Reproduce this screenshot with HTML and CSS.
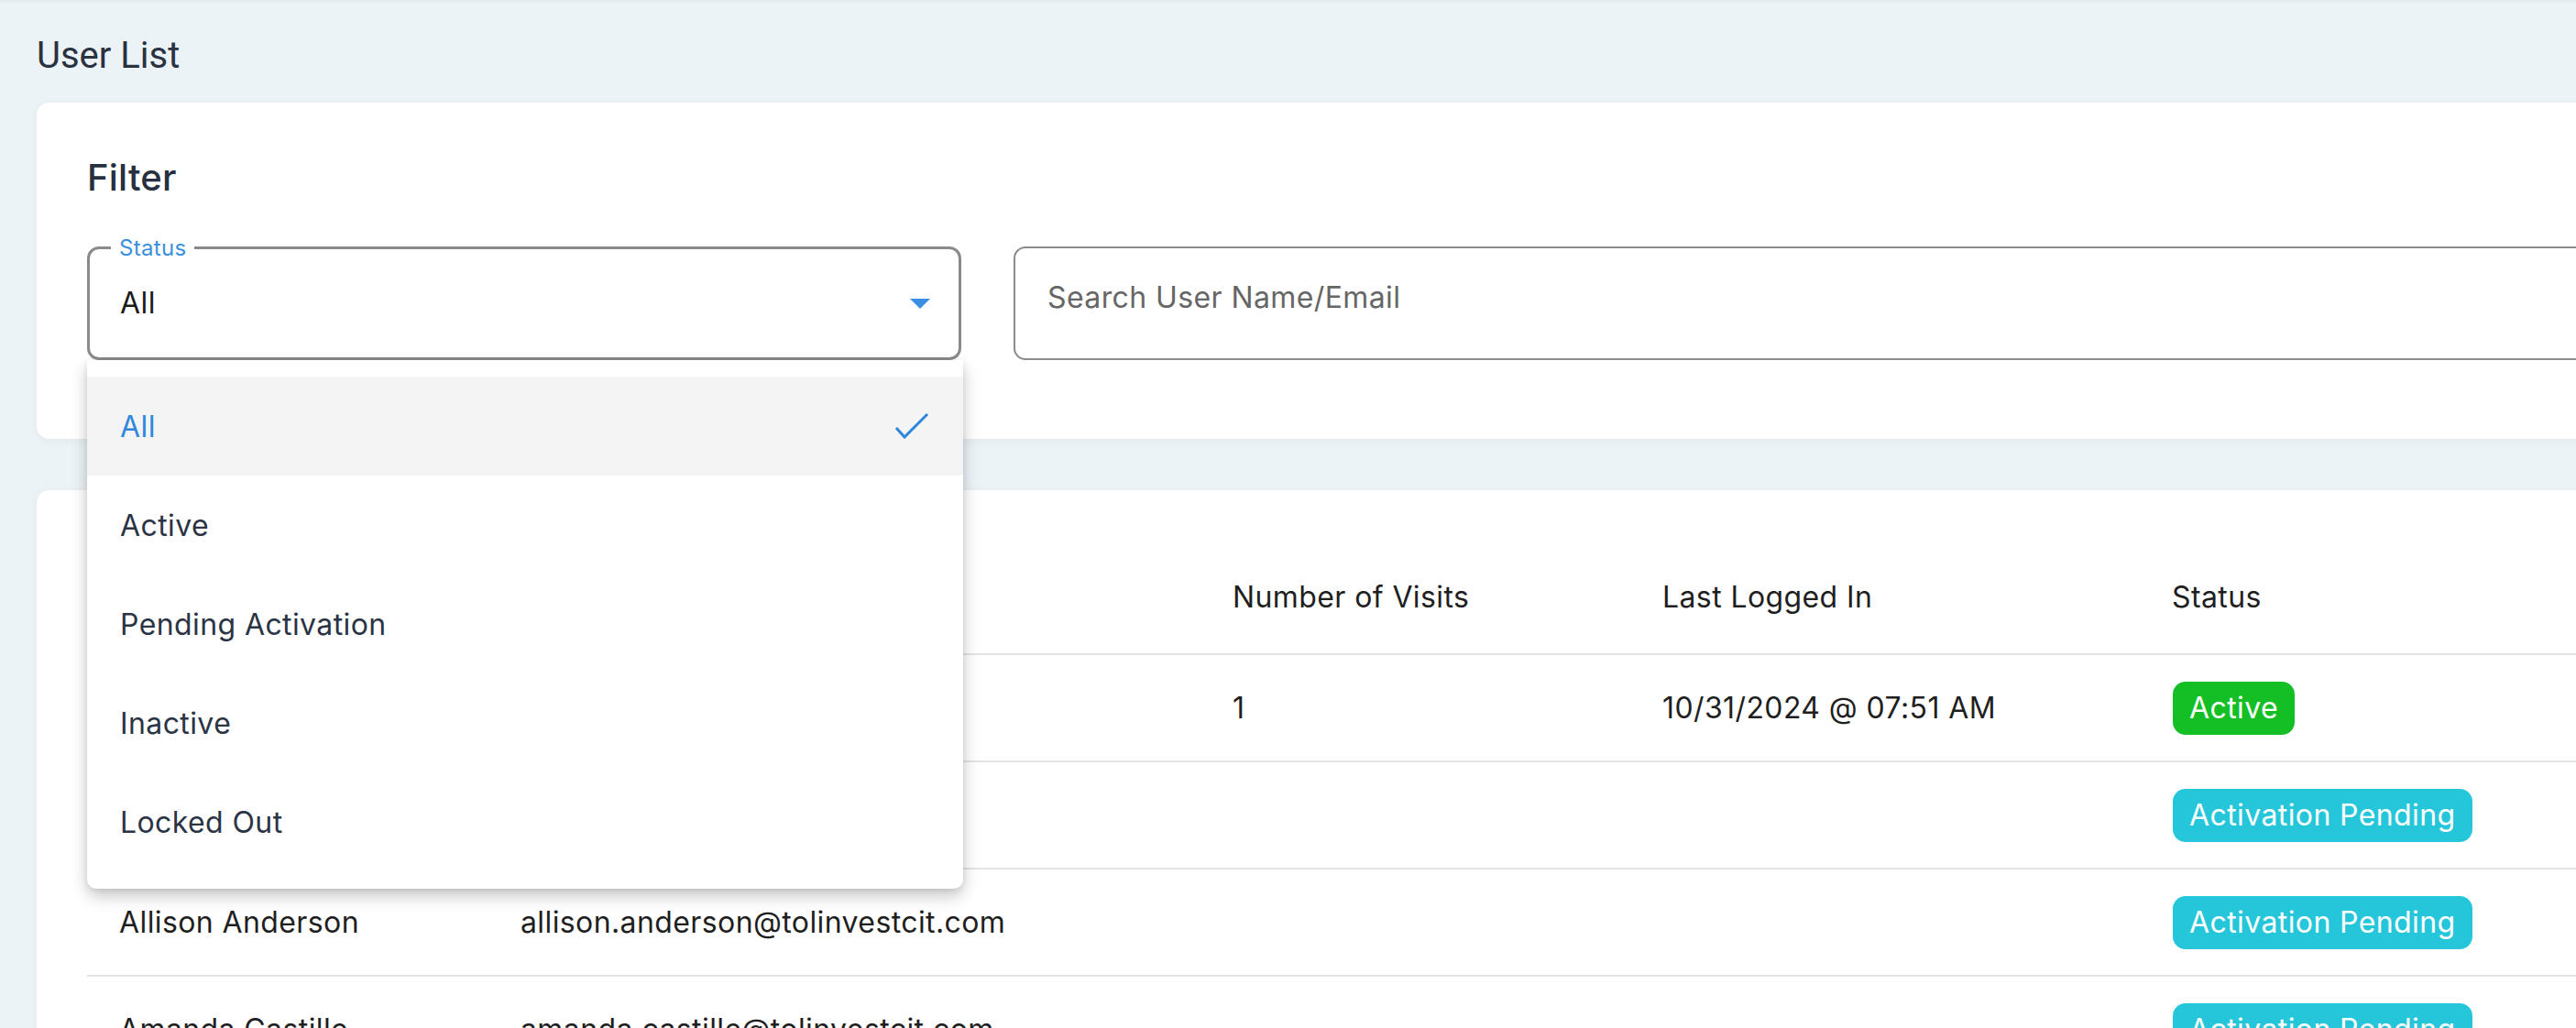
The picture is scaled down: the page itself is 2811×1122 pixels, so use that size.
FILE: index.html
```html
<!DOCTYPE html>
<html lang="en">
<head>
<meta charset="utf-8">
<title>User List</title>
<link rel="stylesheet" href="styles.css">
</head>
<body>
<div class="page">
  <h1 class="page-title">User List</h1>

  <section class="card filter-card">
    <h2 class="card-title">Filter</h2>
    <div class="filter-row">
      <div class="select-wrap">
        <div class="field field-select">
          <span class="field-label">Status</span>
          <span class="field-value">All</span>
          <span class="caret"></span>
        </div>
        <ul class="menu">
          <li class="menu-item is-selected">
            <span>All</span>
            <svg class="check" width="38" height="30" viewBox="0 0 38 30"><polyline points="2,17 11,27 36,2" fill="none" stroke="#2f87dc" stroke-width="3"/></svg>
          </li>
          <li class="menu-item"><span>Active</span></li>
          <li class="menu-item"><span>Pending Activation</span></li>
          <li class="menu-item"><span>Inactive</span></li>
          <li class="menu-item"><span>Locked Out</span></li>
        </ul>
      </div>
      <div class="field field-search">
        <span class="placeholder">Search User Name/Email</span>
      </div>
    </div>
  </section>

  <section class="card table-card">
    <div class="table">
      <div class="tr th">
        <div class="td">Name</div>
        <div class="td">Email</div>
        <div class="td">Number of Visits</div>
        <div class="td">Last Logged In</div>
        <div class="td">Status</div>
      </div>
      <div class="tr">
        <div class="td"></div>
        <div class="td"></div>
        <div class="td">1</div>
        <div class="td">10/31/2024 @ 07:51 AM</div>
        <div class="td"><span class="badge badge-active">Active</span></div>
      </div>
      <div class="tr">
        <div class="td"></div>
        <div class="td"></div>
        <div class="td"></div>
        <div class="td"></div>
        <div class="td"><span class="badge badge-pending">Activation Pending</span></div>
      </div>
      <div class="tr">
        <div class="td">Allison Anderson</div>
        <div class="td">allison.anderson@tolinvestcit.com</div>
        <div class="td"></div>
        <div class="td"></div>
        <div class="td"><span class="badge badge-pending">Activation Pending</span></div>
      </div>
      <div class="tr">
        <div class="td">Amanda Castille</div>
        <div class="td">amanda.castille@tolinvestcit.com</div>
        <div class="td"></div>
        <div class="td"></div>
        <div class="td"><span class="badge badge-pending">Activation Pending</span></div>
      </div>
    </div>
  </section>
</div>
</body>
</html>
```

FILE: styles.css
```css
html, body {
  margin: 0;
  padding: 0;
  overflow: hidden;
}

body {
  background: #ecf3f7;
  font-family: Inter, "Noto Sans", sans-serif;
  color: #1f1f1f;
}

.page {
  width: 2960px;
  padding: 37px 0 0 40px;
  box-sizing: border-box;
  background: linear-gradient(to bottom, #e2e9ee 0, #ecf3f7 4px);
}

.page-title {
  margin: 0;
  font-family: Roboto, "Noto Sans", sans-serif;
  font-weight: 400;
  font-size: 40px;
  line-height: 48px;
  color: #2a3140;
}

.card {
  background: #ffffff;
  border-radius: 14px;
  box-shadow: 0 2px 10px rgba(40, 60, 80, 0.06);
}

.filter-card {
  margin-top: 27px;
  padding: 58px 55px 86px 55px;
}

.card-title {
  margin: 0;
  font-size: 40px;
  line-height: 48px;
  font-weight: 500;
  color: #27303f;
  letter-spacing: 0.2px;
}

.filter-row {
  margin-top: 51px;
  display: flex;
  gap: 57px;
}

.select-wrap {
  position: relative;
  width: 954px;
  flex: none;
}

.field {
  box-sizing: border-box;
  height: 124px;
  border-radius: 13px;
  background: #ffffff;
  font-size: 32px;
  line-height: 40px;
  letter-spacing: 0.4px;
}

.field-select {
  position: relative;
  display: flex;
  align-items: center;
  border: 3px solid #8a8a8a;
  padding: 0 31px 0 33px;
}

.field-label {
  position: absolute;
  top: -13px;
  left: 23px;
  padding: 0 9px;
  background: #ffffff;
  font-size: 24px;
  line-height: 24px;
  letter-spacing: 0.3px;
  color: #3a8fdc;
}

.field-value {
  color: #1b1b1b;
}

.caret {
  margin-left: auto;
  width: 0;
  height: 0;
  border-left: 11px solid transparent;
  border-right: 11px solid transparent;
  border-top: 11px solid #3a8fe0;
}

.field-search {
  flex: 1;
  border: 2px solid #8c8c8c;
  padding: 34px 35px 0 35px;
}

.placeholder {
  color: #666666;
}

.menu {
  position: absolute;
  top: 100%;
  left: 0;
  width: 956px;
  margin: 0;
  padding: 18px 0 19px 0;
  list-style: none;
  background: #ffffff;
  border-radius: 0 0 10px 10px;
  box-shadow: 0 8px 18px rgba(0, 0, 0, 0.22), 0 2px 6px rgba(0, 0, 0, 0.08);
  z-index: 10;
}

.menu-item {
  height: 108px;
  display: flex;
  align-items: center;
  justify-content: space-between;
  padding: 0 37px 0 36px;
  font-size: 32px;
  letter-spacing: 0.4px;
  color: #2b3445;
}

.menu-item.is-selected {
  background: #f4f4f4;
  color: #2f88db;
}

.check {
  display: block;
}

.table-card {
  margin-top: 56px;
  padding: 55px 0 0 55px;
  border-radius: 14px 14px 0 0;
}

.tr {
  display: grid;
  grid-template-columns: 438px 777px 469px 556px 1fr;
  align-items: center;
  height: 117px;
  box-sizing: border-box;
  border-bottom: 2px solid #e3e3e3;
  font-size: 32px;
  letter-spacing: 0.4px;
  color: #1f1f1f;
}

.tr.th {
  height: 125px;
}

.td {
  padding-left: 35px;
  white-space: nowrap;
}

.badge {
  display: inline-block;
  height: 58px;
  line-height: 58px;
  padding: 0 18px;
  border-radius: 14px;
  color: #ffffff;
  margin-left: 1px;
}

.badge-active {
  background: #14bf25;
}

.badge-pending {
  background: #26c6da;
}
```
